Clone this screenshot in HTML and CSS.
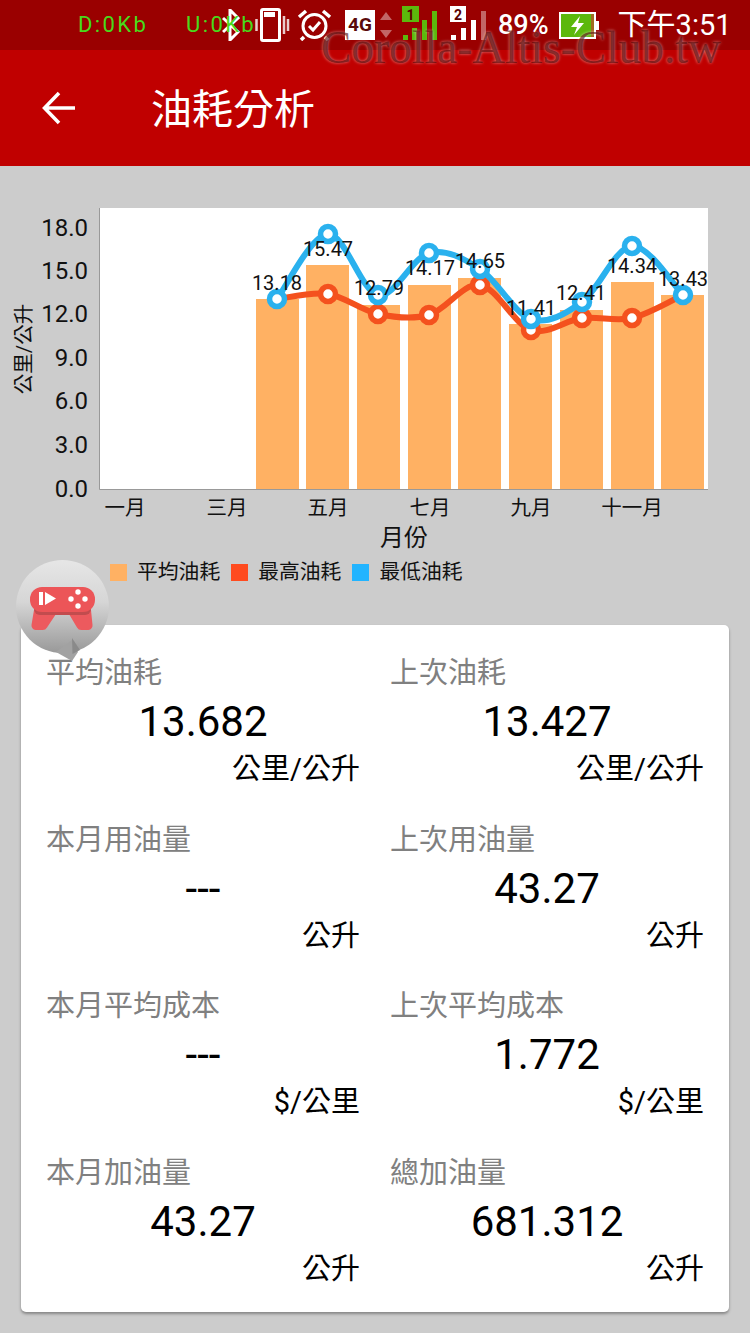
FILE: index.html
```html
<!DOCTYPE html>
<html lang="zh-Hant">
<head>
<meta charset="utf-8">
<title>油耗分析</title>
<link rel="stylesheet" href="styles.css">
</head>
<body>
<div class="phone">
  <header class="status">
    <span class="speed speed-down">D:0Kb</span>
    <span class="speed speed-up">U:0Kb</span>
    <svg class="ic ic-bt" viewBox="0 0 18 32"><path d="M1 9l15 14-8 8V1l8 8L1 23" fill="none" stroke="#fff" stroke-width="3"/></svg>
    <svg class="ic ic-vib" viewBox="0 0 35 34"><rect x="6.500" y="1.500" width="18" height="31" rx="1.500" fill="none" stroke="#fff" stroke-width="3"/><rect x="9" y="4" width="11" height="5" fill="#fff"/><path d="M1.500 11v12M29 8v18M33 11v12" stroke="#fff" stroke-width="2.500" opacity=".8"/></svg>
    <svg class="ic ic-alarm" viewBox="0 0 35 32"><circle cx="17.500" cy="17" r="11.500" fill="none" stroke="#fff" stroke-width="3"/><path d="M12 17l4 4 7-8" fill="none" stroke="#fff" stroke-width="3"/><path d="M2 8l7-6M33 8l-7-6M7 28l-3 3M28 28l3 3" stroke="#fff" stroke-width="3.500"/></svg>
    <span class="net">4G</span>
    <svg class="ic ic-arrows" viewBox="0 0 12 32"><path d="M6 3l6 8H0zM6 29l6-8H0z" fill="#fff" opacity=".4"/></svg>
    <svg class="ic ic-sim" viewBox="0 0 36 40"><rect x="0" y="0" width="17" height="16" fill="#5cb80c"/><text class="sim-no" x="8.500" y="13.500">1</text><path d="M1 29h5v5H1zM10 22h5v12h-5zM20 14h5v20h-5zM30 5h5v29h-5z" fill="#5cb80c"/></svg>
    <svg class="ic ic-sim2" viewBox="0 0 37 40"><rect x="0" y="0" width="16" height="16" fill="#fff"/><text class="sim-no" x="8" y="13.500">2</text><path d="M1 29h5v5H1zM11 22h5v12h-5zM21 14h5v20h-5z" fill="#fff"/><path d="M31 5h5v29h-5z" fill="#fff" opacity=".4"/></svg>
    <span class="pct">89%</span>
    <svg class="ic ic-batt" viewBox="0 0 40 27"><rect x="1" y="1" width="35" height="25" fill="none" stroke="#fff" stroke-width="2"/><rect x="2" y="2" width="30" height="23" fill="#5cb80c"/><rect x="32" y="2" width="3" height="23" fill="#a06a20"/><rect x="36" y="9" width="4" height="9" fill="#fff"/><path d="M21 4l-9 11h6l-3 8 10-12h-6z" fill="#fff"/></svg>
    <span class="clock">下午3:51</span>
  </header>

  <div class="appbar">
    <svg class="back" viewBox="0 0 34 34"><path d="M33 17H3M17 2L2.500 17 17 32" fill="none" stroke="#fff" stroke-width="3.500"/></svg>
    <h1 class="title">油耗分析</h1>
  </div>

  <section class="chart">
    <svg class="plot" viewBox="0 166 750 386">
      <rect class="plot-bg" x="100" y="208" width="608" height="281"/>
      <path class="axis" d="M99.500 208V489.500H708"/>
      <g class="tick">
        <text x="88" y="236">18.0</text>
        <text x="88" y="279">15.0</text>
        <text x="88" y="322">12.0</text>
        <text x="88" y="366">9.0</text>
        <text x="88" y="409">6.0</text>
        <text x="88" y="453">3.0</text>
        <text x="88" y="497">0.0</text>
      </g>
      <text class="y-title" transform="translate(31 349) rotate(-90)">公里/公升</text>
      <g class="bar">
        <rect x="256" y="299" width="43" height="190"/>
        <rect x="306" y="265" width="43" height="224"/>
        <rect x="357" y="305" width="43" height="184"/>
        <rect x="408" y="285" width="43" height="204"/>
        <rect x="458" y="278" width="43" height="211"/>
        <rect x="509" y="324" width="43" height="165"/>
        <rect x="560" y="310" width="43" height="179"/>
        <rect x="611" y="282" width="43" height="207"/>
        <rect x="661" y="295" width="43" height="194"/>
      </g>
      <path class="line line-high" d="M277 299C285.500 298.200 311.200 291.500 328 294C344.800 296.500 361.200 310.500 378 314C394.800 317.500 412 319.800 429 315C446 310.200 463 282.500 480 285C497 287.500 514 324.500 531 330C548 335.500 565.200 320 582 318C598.800 316 615.200 321.800 632 318C648.800 314.200 674.500 298.800 683 295"/>
      <g class="dot dot-high">
        <circle cx="328" cy="294" r="7.500"/>
        <circle cx="378" cy="314" r="7.500"/>
        <circle cx="429" cy="315" r="7.500"/>
        <circle cx="480" cy="285" r="7.500"/>
        <circle cx="531" cy="330" r="7.500"/>
        <circle cx="582" cy="318" r="7.500"/>
        <circle cx="632" cy="318" r="7.500"/>
      </g>
      <path class="line line-low" d="M277 299C285.500 288.200 311.200 234.700 328 234C344.800 233.300 361.200 291.800 378 295C394.800 298.200 412 257.300 429 253C446 248.700 463 258 480 269C497 280 514 313.500 531 319C548 324.500 565.200 314.200 582 302C598.800 289.800 615.200 247.200 632 246C648.800 244.800 674.500 286.800 683 295"/>
      <g class="dot dot-low">
        <circle cx="277" cy="299" r="7.500"/>
        <circle cx="328" cy="234" r="7.500"/>
        <circle cx="378" cy="295" r="7.500"/>
        <circle cx="429" cy="253" r="7.500"/>
        <circle cx="480" cy="269" r="7.500"/>
        <circle cx="531" cy="319" r="7.500"/>
        <circle cx="582" cy="302" r="7.500"/>
        <circle cx="632" cy="246" r="7.500"/>
        <circle cx="683" cy="295" r="7.500"/>
      </g>
      <g class="value">
        <text x="277" y="290">13.18</text>
        <text x="328" y="256">15.47</text>
        <text x="379" y="295">12.79</text>
        <text x="430" y="275">14.17</text>
        <text x="480" y="268">14.65</text>
        <text x="531" y="315">11.41</text>
        <text x="581" y="300">12.41</text>
        <text x="632" y="273">14.34</text>
        <text x="683" y="286">13.43</text>
      </g>
      <g class="month">
        <text x="125" y="515">一月</text>
        <text x="227" y="515">三月</text>
        <text x="328" y="515">五月</text>
        <text x="430" y="515">七月</text>
        <text x="531" y="515">九月</text>
        <text x="632" y="515">十一月</text>
      </g>
      <text class="x-title" x="404" y="546">月份</text>
    </svg>
    <ul class="legend">
      <li class="legend-item"><i class="swatch swatch-avg"></i>平均油耗</li>
      <li class="legend-item"><i class="swatch swatch-high"></i>最高油耗</li>
      <li class="legend-item"><i class="swatch swatch-low"></i>最低油耗</li>
    </ul>
  </section>

  <main class="card">
    <div class="stat"><div class="stat-label">平均油耗</div><div class="stat-value">13.682</div><div class="stat-unit">公里/公升</div></div>
    <div class="stat"><div class="stat-label">上次油耗</div><div class="stat-value">13.427</div><div class="stat-unit">公里/公升</div></div>
    <div class="stat"><div class="stat-label">本月用油量</div><div class="stat-value">---</div><div class="stat-unit">公升</div></div>
    <div class="stat"><div class="stat-label">上次用油量</div><div class="stat-value">43.27</div><div class="stat-unit">公升</div></div>
    <div class="stat"><div class="stat-label">本月平均成本</div><div class="stat-value">---</div><div class="stat-unit">$/公里</div></div>
    <div class="stat"><div class="stat-label">上次平均成本</div><div class="stat-value">1.772</div><div class="stat-unit">$/公里</div></div>
    <div class="stat"><div class="stat-label">本月加油量</div><div class="stat-value">43.27</div><div class="stat-unit">公升</div></div>
    <div class="stat"><div class="stat-label">總加油量</div><div class="stat-value">681.312</div><div class="stat-unit">公升</div></div>
  </main>

  <!-- floating game shortcut bubble -->
  <svg class="bubble" viewBox="0 0 94 102">
    <defs>
      <linearGradient id="bubbleFill" x1="0" y1="0" x2="0" y2="1">
        <stop offset="0" stop-color="#e6e6e6"/>
        <stop offset=".45" stop-color="#d6d6d6"/>
        <stop offset="1" stop-color="#999"/>
      </linearGradient>
    </defs>
    <circle cx="46.500" cy="46.500" r="46.500" fill="url(#bubbleFill)"/>
    <path d="M56 80L62 92 56 101 40 92z" fill="#a2a2a2"/>
    <path d="M56 78L64 90 56.500 94z" fill="#8a8a8a"/>
    <path d="M18 50L15.500 65a4.500 4.500 0 0 0 4 5h7a5 5 0 0 0 4.500-2.500L40 54h13l8 13.500a5 5 0 0 0 4.500 2.500h7a4.500 4.500 0 0 0 4-5L75 50z" fill="#ec5a5e"/>
    <path d="M18 46h57v3a6 6 0 0 1-6 6H24a6 6 0 0 1-6-6z" fill="#c24c4e"/>
    <rect x="14" y="27" width="65" height="25" rx="12" fill="#ec5558"/>
    <path d="M23 32h4v13h-4zM29 32l11 6.500L29 45z" fill="#fff"/>
    <circle cx="62" cy="32" r="2.700" fill="#fff"/><circle cx="62" cy="46" r="2.700" fill="#fff"/><circle cx="55" cy="39" r="2.700" fill="#fff"/><circle cx="69" cy="39" r="2.700" fill="#fff"/>
  </svg>

  <div class="watermark">Corolla-Altis-Club.tw</div>
</div>
</body>
</html>
```
FILE: styles.css
```css
* { box-sizing: border-box; }

html, body {
  margin: 0;
  padding: 0;
}

body {
  background: #cccccc;
  font-family: Roboto, "Noto Sans CJK TC", sans-serif;
}

.phone {
  position: relative;
  width: 750px;
  height: 1333px;
  overflow: hidden;
  background: #cccccc;
}

/* status bar */
.status {
  position: relative;
  display: flex;
  align-items: center;
  height: 50px;
  padding-left: 222px;
  background: #9a0000;
  color: #fff;
}

.speed {
  position: absolute;
  top: 11px;
  font-size: 22px;
  line-height: 28px;
  letter-spacing: 2.400px;
  color: #48da1c;
  z-index: 1;
}

.speed-down { left: 78px; }
.speed-up { left: 186px; }

.ic { display: block; flex: none; }
.ic-bt { width: 18px; height: 32px; }
.ic-vib { width: 35px; height: 34px; margin-left: 15px; }
.ic-alarm { width: 35px; height: 32px; margin-left: 7px; }
.ic-arrows { width: 12px; height: 32px; margin-left: 5px; }
.ic-sim { width: 36px; height: 40px; margin-left: 10px; margin-top: 2px; }
.ic-sim2 { width: 37px; height: 40px; margin-left: 12px; margin-top: 2px; }
.ic-batt { width: 40px; height: 27px; margin-left: 10px; }

.sim-no {
  font-size: 14px;
  font-weight: 700;
  text-anchor: middle;
  fill: #5a0000;
}

.net {
  width: 30px;
  height: 30px;
  margin-left: 13px;
  background: #fff;
  color: #5a0a0a;
  font-size: 19px;
  font-weight: 700;
  line-height: 30px;
  text-align: center;
}

.pct {
  margin-left: 11px;
  font-size: 27px;
  font-weight: 500;
  line-height: 50px;
}

.clock {
  margin-left: 19px;
  font-size: 29px;
  line-height: 50px;
  white-space: nowrap;
}

/* toolbar */
.appbar {
  display: flex;
  align-items: center;
  height: 116px;
  padding-left: 42px;
  background: #c00000;
  color: #fff;
}

.back { width: 34px; height: 34px; flex: none; }

.title {
  margin: 3px 0 0 75px;
  font-size: 41px;
  font-weight: 400;
  line-height: 56px;
}

/* chart */
.plot {
  display: block;
  width: 750px;
  height: 386px;
}

.plot-bg { fill: #ffffff; }
.axis { fill: none; stroke: #999999; stroke-width: 1; }
.bar rect { fill: #ffb163; }

.tick text {
  font-size: 24px;
  fill: #111;
  text-anchor: end;
}

.y-title {
  font-size: 20.500px;
  fill: #111;
  text-anchor: middle;
}

.line { fill: none; stroke-width: 6; }
.line-high { stroke: #f4511e; }
.line-low { stroke: #2ab1ee; }

.dot circle { fill: #fff; stroke-width: 5.500; }
.dot-high circle { stroke: #f4511e; }
.dot-low circle { stroke: #2ab1ee; }

.value text {
  font-size: 20px;
  fill: #111;
  text-anchor: middle;
}

.month text {
  font-size: 20.500px;
  fill: #111;
  text-anchor: middle;
}

.x-title {
  font-size: 24px;
  fill: #111;
  text-anchor: middle;
}

.legend {
  display: flex;
  gap: 11px;
  margin: 5px 0 0;
  padding: 0 0 0 110px;
  list-style: none;
}

.legend-item {
  display: flex;
  align-items: center;
  font-size: 20.800px;
  line-height: 30px;
  color: #111;
}

.swatch {
  display: block;
  width: 17px;
  height: 17px;
  margin-right: 10px;
}

.swatch-avg { background: #ffb163; }
.swatch-high { background: #ff4b1f; }
.swatch-low { background: #22b4ff; }

/* stat card */
.card {
  display: grid;
  grid-template-columns: 1fr 1fr;
  column-gap: 30px;
  row-gap: 34.670px;
  margin: 38px 21px 0;
  padding: 30px 25px 25px;
  background: #fff;
  border-radius: 5px;
  box-shadow: 0 2px 3px rgba(0, 0, 0, .35);
}

.stat { height: 132px; }

.stat-label {
  font-size: 29px;
  line-height: 36px;
  color: #808080;
}

.stat-value {
  margin-top: 6px;
  font-size: 42px;
  line-height: 50px;
  text-align: center;
  color: #000;
}

.stat-unit {
  margin-top: 4px;
  font-size: 29px;
  line-height: 36px;
  text-align: right;
  color: #000;
}

/* overlays */
.bubble {
  position: absolute;
  left: 16px;
  top: 560px;
  width: 94px;
  height: 102px;
}

.watermark {
  position: absolute;
  left: 321px;
  top: 23px;
  font-family: "Liberation Serif", serif;
  font-size: 45.400px;
  line-height: 50px;
  white-space: nowrap;
  color: rgba(80, 0, 0, .6);
  text-shadow: 0 0 3px rgba(255, 255, 255, .55);
}
```
